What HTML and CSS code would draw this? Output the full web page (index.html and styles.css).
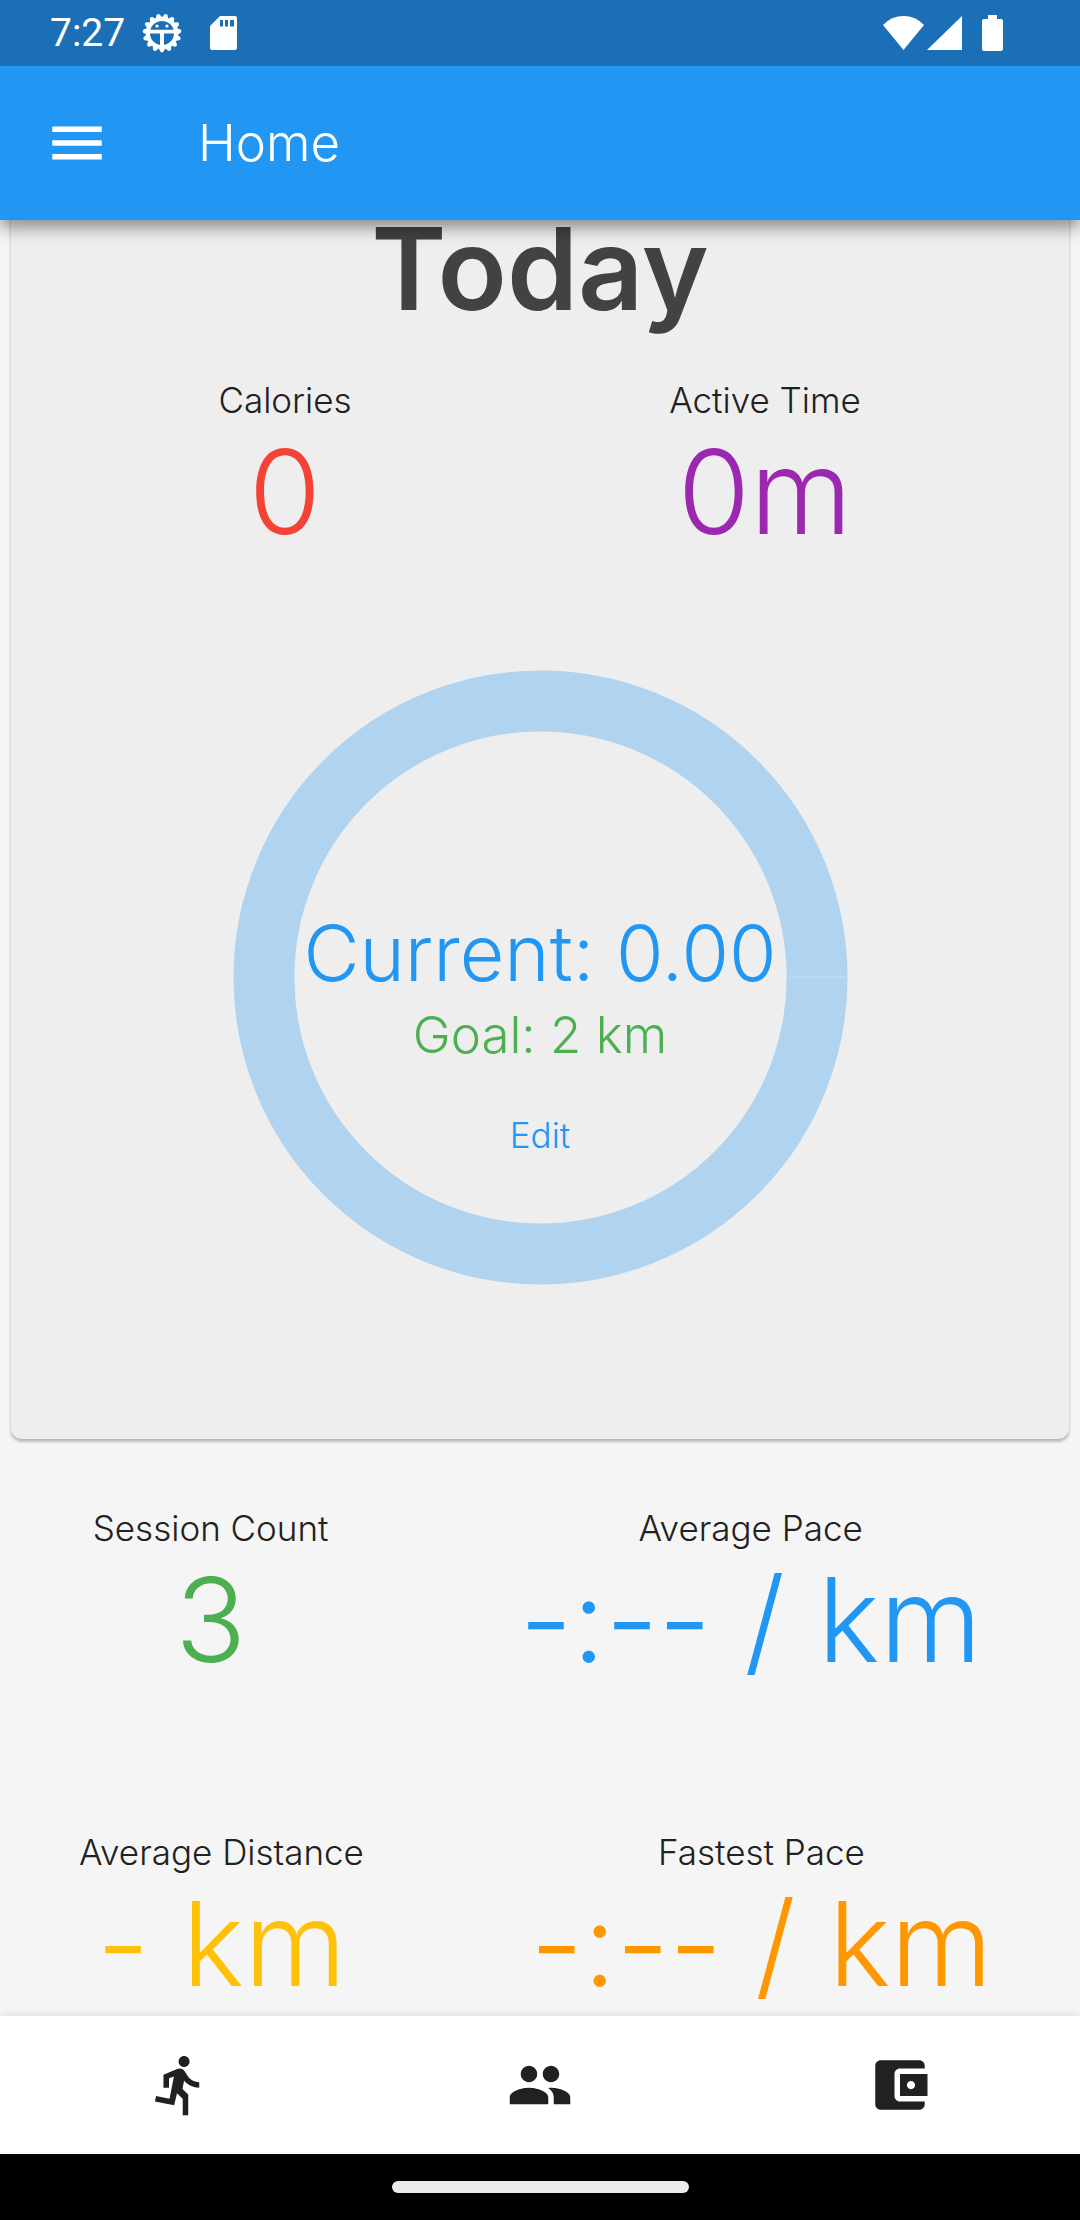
FILE: index.html
```html
<!DOCTYPE html>
<html lang="en">
<head>
<meta charset="utf-8">
<meta name="viewport" content="width=device-width, initial-scale=1">
<title>Home</title>
<link rel="stylesheet" href="styles.css">
</head>
<body>
<div class="status-bar">
  <div class="status-group">
    <span class="clock">7:27</span>
    <svg class="icon-gear" viewBox="0 0 40 40" aria-hidden="true">
      <defs><path id="tooth" d="M-4 14L-1.6 18.6Q0 20.4 1.6 18.6L4 14Z"/></defs>
      <g transform="translate(20 20)" fill="#fff">
        <use href="#tooth"/><use href="#tooth" transform="rotate(24)"/><use href="#tooth" transform="rotate(48)"/><use href="#tooth" transform="rotate(72)"/><use href="#tooth" transform="rotate(96)"/><use href="#tooth" transform="rotate(120)"/><use href="#tooth" transform="rotate(144)"/><use href="#tooth" transform="rotate(168)"/><use href="#tooth" transform="rotate(192)"/><use href="#tooth" transform="rotate(216)"/><use href="#tooth" transform="rotate(240)"/><use href="#tooth" transform="rotate(264)"/><use href="#tooth" transform="rotate(288)"/><use href="#tooth" transform="rotate(312)"/><use href="#tooth" transform="rotate(336)"/>
        <circle r="13.8" fill="none" stroke="#fff" stroke-width="3.4"/>
        <path d="M-13-3.2H13V.6H2V13H-2V.6H-13Z"/>
        <circle cx="-5" cy="-7" r="1.6"/><circle cx="5" cy="-7" r="1.6"/>
      </g>
    </svg>
    <svg class="icon-sd" viewBox="0 0 27 34" aria-hidden="true"><path fill="#fff" fill-rule="evenodd" d="M10 0H25Q27 0 27 2V32Q27 34 25 34H2Q0 34 0 32V10ZM10 4V10.500H13V4ZM15 4V10.500H18V4ZM20 4V10.500H24V4Z"/></svg>
  </div>
  <div class="status-group">
    <svg class="icon-wifi" viewBox="0 0 41 34" aria-hidden="true"><path fill="#fff" d="M0 9Q8.500 0 20.500 0T41 9L20.500 34Z"/></svg>
    <svg class="icon-signal" viewBox="0 0 35 34" aria-hidden="true"><path fill="#fff" d="M35 0V34H0Z"/></svg>
    <svg class="icon-battery" viewBox="0 0 21 36" aria-hidden="true"><path fill="#fff" d="M6 0H15V4H19Q21 4 21 6V34Q21 36 19 36H2Q0 36 0 34V6Q0 4 2 4H6Z"/></svg>
  </div>
</div>

<header class="app-bar">
  <button class="menu-button" type="button" aria-label="Open menu">
    <svg class="icon" viewBox="0 0 24 24"><path d="M3 18h18v-2H3v2zm0-5h18v-2H3v2zm0-7v2h18V6H3z"/></svg>
  </button>
  <h1 class="app-title">Home</h1>
</header>

<main class="content">
  <section class="card">
    <h2 class="card-title">Today</h2>
    <div class="card-stats">
      <div class="stat"><span class="label">Calories</span><span class="value red">0</span></div>
      <div class="stat"><span class="label">Active Time</span><span class="value purple">0m</span></div>
    </div>
    <div class="goal">
      <svg class="ring" viewBox="0 0 616 616" aria-hidden="true">
        <circle cx="308" cy="308" r="277" fill="none" stroke="#b0d3f0" stroke-width="61"/>
        <path d="M554 307.500H616" stroke="#c8dff2"/>
      </svg>
      <div class="goal-text">
        <span class="current">Current: 0.00</span>
        <span class="target">Goal: 2 km</span>
        <button class="edit" type="button">Edit</button>
      </div>
    </div>
  </section>

  <section class="stats">
    <div class="stats-row sessions">
      <div class="stat"><span class="label">Session Count</span><span class="value green">3</span></div>
      <div class="stat"><span class="label">Average Pace</span><span class="value blue">-:-- / km</span></div>
    </div>
    <div class="stats-row distances">
      <div class="stat"><span class="label">Average Distance</span><span class="value amber">- km</span></div>
      <div class="stat"><span class="label">Fastest Pace</span><span class="value orange">-:-- / km</span></div>
    </div>
  </section>
</main>

<nav class="tabs">
  <button class="tab" type="button" aria-label="Run"><svg class="icon" viewBox="0 0 24 24"><path d="M13.490 5.480c1.100 0 2-.9 2-2s-.9-2-2-2-2 .9-2 2 .9 2 2 2zm-3.600 13.900l1-4.400 2.100 2v6h2v-7.500l-2.100-2 .6-3c1.300 1.500 3.300 2.500 5.500 2.500v-2c-1.900 0-3.500-1-4.300-2.400l-1-1.600c-.4-.6-1-1-1.700-1-.3 0-.5.1-.8.1l-5.200 2.200v4.700h2v-3.400l1.800-.7-1.600 8.100-4.900-1-.4 2 7 1.400z"/></svg></button>
  <button class="tab" type="button" aria-label="Friends"><svg class="icon" viewBox="0 0 24 24"><path d="M16 11c1.660 0 2.990-1.340 2.990-3S17.660 5 16 5c-1.660 0-3 1.340-3 3s1.340 3 3 3zm-8 0c1.660 0 2.990-1.340 2.990-3S9.660 5 8 5C6.340 5 5 6.340 5 8s1.340 3 3 3zm0 2c-2.330 0-7 1.170-7 3.500V19h14v-2.500c0-2.330-4.670-3.500-7-3.500zm8 0c-.29 0-.62.02-.97.05 1.160.84 1.970 1.970 1.970 3.450V19h6v-2.500c0-2.330-4.670-3.500-7-3.500z"/></svg></button>
  <button class="tab" type="button" aria-label="Wallet"><svg class="icon" viewBox="0 0 24 24"><path d="M21 18v1c0 1.100-.9 2-2 2H5c-1.110 0-2-.9-2-2V5c0-1.100.89-2 2-2h14c1.100 0 2 .9 2 2v1h-9c-1.110 0-2 .9-2 2v8c0 1.100.89 2 2 2h9zm-9-2h10V8H12v8zm4-2.500c-.83 0-1.500-.67-1.500-1.500s.67-1.500 1.500-1.500 1.500.67 1.500 1.500-.67 1.500-1.500 1.500z"/></svg></button>
</nav>
<div class="gesture-bar"><div class="gesture-pill"></div></div>
</body>
</html>
```
FILE: styles.css
```css
* { box-sizing: border-box; }

body {
  margin: 0;
  min-height: 100vh;
  display: flex;
  flex-direction: column;
  background: #f5f5f5;
  color: #212121;
  font-family: Inter, "Open Sans", sans-serif;
  font-weight: 300;
}

h1, h2 { margin: 0; }

button {
  margin: 0;
  padding: 0;
  border: 0;
  background: none;
  color: inherit;
  font: inherit;
  cursor: pointer;
}

.icon {
  display: block;
  width: 66px;
  height: 66px;
  fill: currentColor;
}

/* System status bar */
.status-bar {
  position: relative;
  z-index: 2;
  display: flex;
  justify-content: space-between;
  height: 66px;
  padding: 0 77px 0 50px;
  background: #1a6fb6;
  color: #fff;
}

.status-group { display: flex; align-items: center; }
.clock { font: 400 39px/66px Roboto, sans-serif; }
.icon-gear { width: 40px; height: 40px; margin: 0 28px 0 17px; }
.icon-sd { width: 27px; height: 34px; }
.icon-wifi { width: 41px; height: 34px; }
.icon-signal { width: 35px; height: 34px; margin: 0 20px 0 3px; }
.icon-battery { width: 21px; height: 36px; }

/* App bar */
.app-bar {
  position: relative;
  z-index: 1;
  display: flex;
  align-items: center;
  gap: 88px;
  height: 154px;
  padding: 0 44px;
  background: #2196f3;
  color: #fff;
  box-shadow: 0 6px 11px rgba(0, 0, 0, .2), 0 11px 14px rgba(0, 0, 0, .14), 0 3px 28px rgba(0, 0, 0, .12);
}

.app-title { font-size: 51px; font-weight: 300; line-height: 66px; }

/* Scrolled content: the card's top edge lies beneath the app bar */
.content { flex: 1; }

.card {
  display: flex;
  flex-direction: column;
  margin: -11px 11px 0;
  padding-bottom: 154px;
  border-radius: 11px;
  background: #eee;
  box-shadow: 0 3px 3px rgba(0, 0, 0, .16), 0 2px 3px rgba(0, 0, 0, .1), 0 0 4px rgba(0, 0, 0, .06);
}

.card-title {
  margin-bottom: 49px;
  color: #424242;
  font-size: 114px;
  font-weight: 600;
  line-height: 120px;
  text-align: center;
}

.card-stats {
  display: grid;
  grid-template-columns: 1fr 1fr;
  padding: 0 64px 0 34px;
}

.stat {
  display: flex;
  flex-direction: column;
  align-items: center;
  white-space: nowrap;
}

.label { font-size: 35px; line-height: 44px; }
.value { font-size: 117px; line-height: 140px; }

.red { color: #f44336; }
.purple { color: #9c27b0; }
.green { color: #4caf50; }
.blue { color: #2196f3; }
.amber { color: #ffc107; }
.orange { color: #ff9800; }

/* Goal ring with its text on top */
.goal {
  display: grid;
  justify-content: center;
  margin-top: 108px;
}

.ring, .goal-text { grid-area: 1 / 1; }
.ring { display: block; width: 615px; height: 615px; }

.goal-text {
  display: flex;
  flex-direction: column;
  align-items: center;
  padding-top: 235px;
}

.current { color: #2196f3; font-size: 77px; line-height: 96px; }
.target { color: #4caf50; font-size: 51px; line-height: 68px; }
.edit { padding: 0 44px; color: #2196f3; font-size: 35px; line-height: 132px; }

/* Totals */
.stats {
  display: flex;
  flex-direction: column;
  gap: 140px;
  padding-top: 67px;
}

.stats-row { display: grid; }
.sessions { grid-template-columns: 39fr 61fr; }
.distances { grid-template-columns: 41fr 59fr; }

/* Bottom navigation */
.tabs {
  position: relative;
  display: grid;
  grid-template-columns: repeat(3, 1fr);
  height: 138px;
  background: #fff;
  box-shadow: 0 -1px 8px rgba(0, 0, 0, .1);
}

.tab { display: grid; place-items: center; }

.gesture-bar {
  display: grid;
  place-items: center;
  height: 66px;
  background: #000;
}

.gesture-pill {
  width: 297px;
  height: 12px;
  border-radius: 6px;
  background: #ebebeb;
}
```
